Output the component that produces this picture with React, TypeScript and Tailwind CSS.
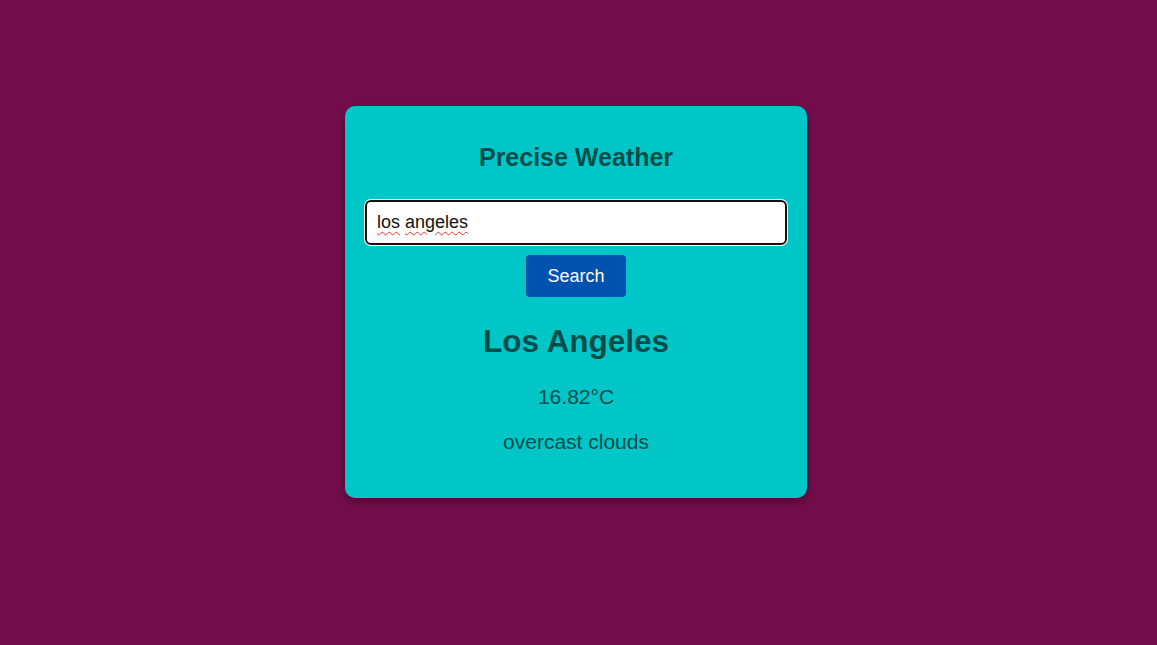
import React from "react";

export default function App() {
  return (
    <div
      className="min-h-[645px] w-full bg-[#730e4b] flex justify-center pr-[5px] pt-[106px]"
      style={{ fontFamily: '"Liberation Sans", Arial, sans-serif' }}
    >
      <div className="w-[462px] h-[392px] bg-[#00c6c8] rounded-[10px] shadow-[0_4px_10px_rgba(0,0,0,0.35)] px-[20px] pt-[37px] flex flex-col items-center text-[#004d4a]">
        <h1 className="text-[25px] leading-[28px] font-bold m-0">Precise Weather</h1>
        <div className="mt-[29px] w-full h-[45px] bg-white rounded-[6px] border-2 border-[#111] shadow-[0_0_0_1px_#fff] flex items-center px-[10px] text-[18px] text-[#111]">
          <span className="underline decoration-wavy decoration-[#f03030] decoration-1 underline-offset-[3px]">los</span>
          <span className="ml-[5px] underline decoration-wavy decoration-[#f03030] decoration-1 underline-offset-[3px]">angeles</span>
        </div>
        <button className="mt-[10px] w-[100px] h-[42px] bg-[#0052ae] text-white text-[18px] rounded-[4px]">
          Search
        </button>
        <h2 className="mt-[26px] text-[31.5px] leading-[37px] font-bold">Los Angeles</h2>
        <p className="mt-[25px] text-[21px] leading-[24px]">16.82°C</p>
        <p className="mt-[21px] text-[21px] leading-[24px]">overcast clouds</p>
      </div>
    </div>
  );
}
